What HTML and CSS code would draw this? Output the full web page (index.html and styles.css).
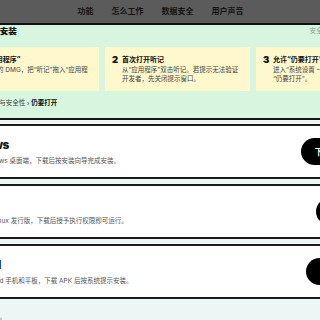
FILE: index.html
```html
<!DOCTYPE html>
<html lang="zh-CN">
<head>
    <meta charset="UTF-8">
    <meta name="viewport" content="width=device-width, initial-scale=1.0">
    <title>听记 - 下载安装</title>
    <link rel="stylesheet" href="styles.css">
</head>
<body>

    <!-- 顶部导航 -->
    <header class="topbar">
        <nav class="nav">
            <a href="#features">功能</a>
            <a href="#how">怎么工作</a>
            <a href="#privacy">数据安全</a>
            <a href="#voices">用户声音</a>
        </nav>
    </header>

    <main class="page">
        <!-- macOS 安装步骤 -->
        <section class="install">
            <div class="install-head">
                <h2>在 macOS 上安装</h2>
                <span class="install-note">安全说明：安装包已签名公证</span>
            </div>
            <ol class="steps">
                <li class="step">
                    <span class="step-num">1</span>
                    <div class="step-body">
                        <h3>拖入“应用程序”</h3>
                        <p>打开下载的 DMG，把“听记”拖入“应用程序”即可。</p>
                    </div>
                </li>
                <li class="step">
                    <span class="step-num">2</span>
                    <div class="step-body">
                        <h3>首次打开听记</h3>
                        <p>从“应用程序”双击听记。若提示无法验证开发者，先关闭提示窗口。</p>
                    </div>
                </li>
                <li class="step">
                    <span class="step-num">3</span>
                    <div class="step-body">
                        <h3>允许“仍要打开”</h3>
                        <p>进入“系统设置 – 隐私”，找到听记并点击“仍要打开”。</p>
                    </div>
                </li>
            </ol>
            <p class="crumb">系统设置 › 隐私与安全性 › <b>仍要打开</b></p>
        </section>

        <!-- 其他平台下载 -->
        <ul class="platforms">
            <li class="platform">
                <div class="platform-info">
                    <h3>Windows</h3>
                    <p>适用于 Windows 桌面端，下载后按安装向导完成安装。</p>
                </div>
                <a class="dl-button" href="#win">下载 Windows 版</a>
            </li>
            <li class="platform">
                <div class="platform-info">
                    <h3>Linux</h3>
                    <p>适用于主流 Linux 发行版，下载后授予执行权限即可运行。</p>
                </div>
                <a class="dl-button" href="#linux">下载 Linux 版</a>
            </li>
            <li class="platform">
                <div class="platform-info">
                    <h3>Android</h3>
                    <p>适用于 Android 手机和平板，下载 APK 后按系统提示安装。</p>
                </div>
                <a class="dl-button" href="#android">下载 Android 版</a>
            </li>
        </ul>
        <p class="foot-note">如遇问题请反馈。</p>
    </main>

</body>
</html>
```

FILE: styles.css
```css
body {
    margin: 0;
    background-color: #eef5f5;
    color: #111;
    font-family: Inter, "Noto Sans CJK SC", sans-serif;
    overflow: hidden;
}
h2, h3, p, ol, ul {
    margin: 0;
    padding: 0;
}
li {
    list-style: none;
}

/* 顶部导航 */
.topbar {
    height: 23px;
    background-color: #5b5b5b;
    border-bottom: 2px solid #111;
}
.nav {
    display: flex;
    justify-content: center;
    gap: 18px;
    padding-left: 1px;
}
.nav a {
    color: #151515;
    text-decoration: none;
    font-size: 8px;
    font-weight: 700;
    line-height: 23px;
}

/* 页面整体（左侧被裁切） */
.page {
    margin-left: -46px;
    width: 460px;
}

/* 安装步骤区 */
.install {
    background-color: #d7f5df;
    border-bottom: 2px solid #151515;
    padding: 0 0 10px;
}
.install-head {
    display: flex;
    justify-content: space-between;
    align-items: flex-start;
    height: 22px;
}
.install-head h2 {
    font-size: 8.5px;
    font-weight: 800;
    line-height: 12px;
    margin-left: -5px;
}
.install-note {
    font-size: 6.5px;
    color: #9a9a9a;
    line-height: 10px;
    margin-top: 1px;
    margin-right: 20px;
}
.steps {
    display: grid;
    grid-template-columns: repeat(3, 145px);
    gap: 6px;
}
.step {
    display: flex;
    gap: 4px;
    background-color: #fff8cd;
    padding: 8px 7px 7px;
    height: 29px;
}
.step-num {
    font-size: 9.5px;
    font-weight: 900;
    line-height: 9px;
    width: 6px;
}
.step-body h3 {
    font-size: 7px;
    font-weight: 700;
    line-height: 9px;
    margin-bottom: 2px;
}
.step-body p {
    font-size: 6.5px;
    line-height: 9px;
    color: #444;
    width: 121px;
}
.crumb {
    font-size: 6.5px;
    color: #444;
    line-height: 9px;
    margin-top: 8px;
}
.crumb b {
    color: #111;
}

/* 其他平台 */
.platforms {
    display: flex;
    flex-direction: column;
    gap: 5px;
    padding-top: 4px;
}
.platform {
    display: flex;
    justify-content: space-between;
    align-items: center;
    background-color: #fff;
    border: 2px solid #1b1b1b;
    padding: 12px 19px 12px 2px;
}
.platform-info h3 {
    font-size: 12px;
    font-weight: 800;
    line-height: 14px;
    letter-spacing: -0.4px;
    margin-left: -2px;
}
.platform-info p {
    font-size: 6.5px;
    line-height: 8px;
    color: #555;
    margin-top: 5px;
}
.dl-button {
    display: flex;
    align-items: center;
    height: 27px;
    padding: 0 14px;
    border-radius: 999px;
    background-color: #000;
    color: #fff;
    font-size: 8px;
    font-weight: 700;
    text-decoration: none;
}
.foot-note {
    font-size: 6.5px;
    color: #666;
    margin-top: 12px;
}
```
